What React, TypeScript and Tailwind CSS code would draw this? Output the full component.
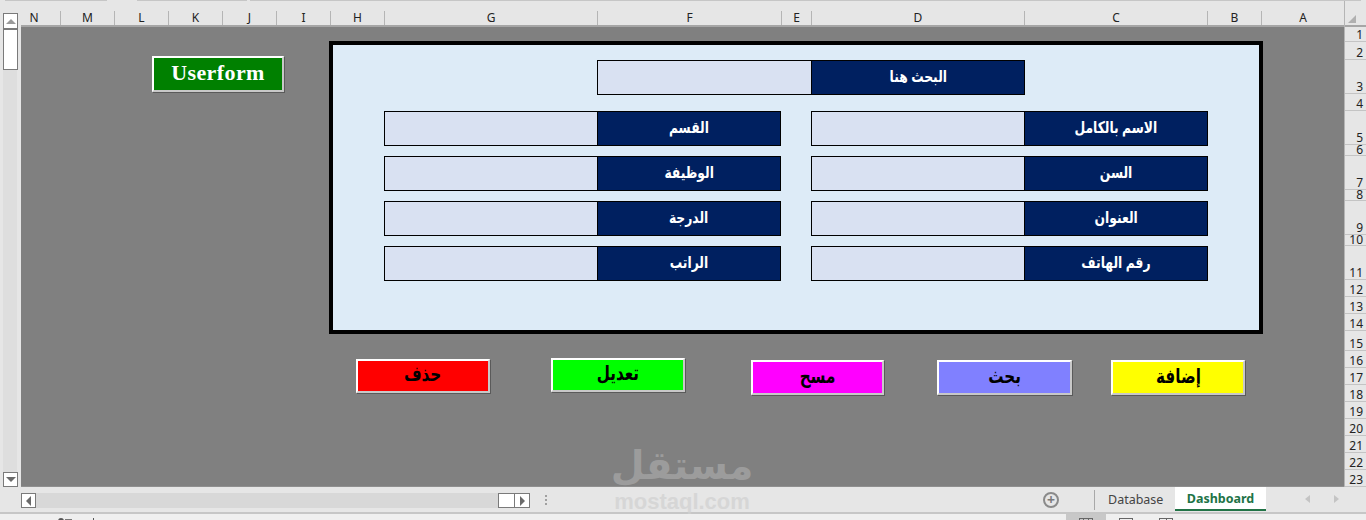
const columns = [
  { label: "N", width: 40 },
  { label: "M", width: 54 },
  { label: "L", width: 54 },
  { label: "K", width: 54 },
  { label: "J", width: 54 },
  { label: "I", width: 54 },
  { label: "H", width: 54 },
  { label: "G", width: 213 },
  { label: "F", width: 184 },
  { label: "E", width: 30 },
  { label: "D", width: 213 },
  { label: "C", width: 183 },
  { label: "B", width: 54 },
  { label: "A", width: 82 },
];

const rows = [
  { label: "1", height: 15 },
  { label: "2", height: 18 },
  { label: "3", height: 34 },
  { label: "4", height: 17 },
  { label: "5", height: 34 },
  { label: "6", height: 11 },
  { label: "7", height: 34 },
  { label: "8", height: 11 },
  { label: "9", height: 34 },
  { label: "10", height: 11 },
  { label: "11", height: 34 },
  { label: "12", height: 17 },
  { label: "13", height: 17 },
  { label: "14", height: 17 },
  { label: "15", height: 20 },
  { label: "16", height: 17 },
  { label: "17", height: 17 },
  { label: "18", height: 17 },
  { label: "19", height: 17 },
  { label: "20", height: 17 },
  { label: "21", height: 17 },
  { label: "22", height: 17 },
  { label: "23", height: 17 },
];

const leftFields = ["القسم", "الوظيفة", "الدرجة", "الراتب"];
const rightFields = ["الاسم بالكامل", "السن", "العنوان", "رقم الهاتف"];

function FieldLabel({ label }: { label: string }) {
  return (
    <div
      dir="rtl"
      className="flex flex-1 items-center justify-center border-l border-black bg-[#002060] pb-[2px] text-[16px] font-bold text-white"
    >
      <span className="inline-block scale-x-[0.77]">{label}</span>
    </div>
  );
}

function Field({ label }: { label: string }) {
  return (
    <div className="flex h-[35px] w-[397px] border border-black">
      <div className="w-[212px] bg-[#d9e1f2]" />
      <FieldLabel label={label} />
    </div>
  );
}

function ActionButton({ label, className }: { label: string; className: string }) {
  return (
    <div
      dir="rtl"
      className={`flex items-center justify-center border-2 border-b-[#c8c8c8] border-l-white border-r-[#c8c8c8] border-t-white pb-1 text-[20px] font-bold text-black shadow-[1px_1px_0_#5a5a5a] ${className}`}
    >
      <span className="inline-block scale-x-[0.76]">{label}</span>
    </div>
  );
}

export default function App() {
  return (
    <div className="relative flex h-[520px] w-[1366px] flex-col overflow-hidden bg-[#e6e6e6] font-['Noto_Sans','DejaVu_Sans',sans-serif] text-[#222]">
      {/* Ribbon edge */}
      <div className="flex h-px flex-none">
        <div className="ml-[5px] w-[102px] bg-[#c6c6c6]" />
        <div className="ml-[30px] w-[110px] bg-[#c6c6c6]" />
        <div className="ml-[3px] w-[1111px] bg-[#c6c6c6]" />
      </div>

      <div className="flex h-[486px] flex-none">
        {/* Vertical scrollbar */}
        <div className="flex w-[21px] flex-col pl-[3px] pt-[12px]">
          <div className="flex h-[16px] w-[15px] items-center justify-center border border-[#7a7a7a] bg-white">
            <div className="h-0 w-0 border-x-[5px] border-b-[5px] border-x-transparent border-b-[#9a9a9a]" />
          </div>
          <div className="h-[41px] w-[15px] border border-[#7a7a7a] bg-white" />
          <div className="w-[14px] flex-1 bg-[#dedede]" />
          <div className="flex h-[15px] w-[15px] items-center justify-center border border-[#7a7a7a] bg-white">
            <div className="h-0 w-0 border-x-[5px] border-t-[5px] border-x-transparent border-t-[#6a6a6a]" />
          </div>
        </div>

        <div className="flex w-[1323px] flex-col">
          {/* Column headers */}
          <div className="flex h-[26px] border-b-2 border-[#a6a6a6] pt-[10px]">
            {columns.map((col) => (
              <div
                key={col.label}
                style={{ width: col.width }}
                className="flex items-center justify-center border-r border-[#b5b5b5] text-[12px] leading-none first:pr-[13px] last:border-r-0"
              >
                {col.label}
              </div>
            ))}
          </div>

          {/* Sheet */}
          <div className="flex flex-1 flex-col border-b border-[#8f8f8f] bg-[#808080]">
            <div className="flex items-start pl-[131px]">
              <div className="mt-[29px] flex h-[36px] w-[132px] items-center justify-center border-2 border-b-[#c8c8c8] border-l-white border-r-[#c8c8c8] border-t-white bg-[#008000] pb-1 font-['Liberation_Serif',serif] text-[22px] font-bold tracking-[0.4px] text-white shadow-[1px_1px_0_#5a5a5a]">
                Userform
              </div>
              <div className="ml-[45px] mt-[14px] flex h-[293px] w-[934px] flex-col border-4 border-black bg-[#ddebf7] pt-[15px] font-['Liberation_Sans','DejaVu_Sans',sans-serif]">
                <div className="ml-[264px]">
                  <div className="flex h-[35px] w-[428px] border border-black">
                    <div className="w-[213px] bg-[#d9e1f2]" />
                    <FieldLabel label="البحث هنا" />
                  </div>
                </div>
                <div className="ml-[51px] mt-[16px] flex gap-[30px]">
                  <div className="flex flex-col gap-[10px]">
                    {leftFields.map((label) => (
                      <Field key={label} label={label} />
                    ))}
                  </div>
                  <div className="flex flex-col gap-[10px]">
                    {rightFields.map((label) => (
                      <Field key={label} label={label} />
                    ))}
                  </div>
                </div>
              </div>
            </div>

            <div className="flex items-start pl-[335px] font-['Liberation_Serif','DejaVu_Sans',serif]">
              <ActionButton label="حذف" className="mt-[25px] h-[34px] w-[134px] bg-[#ff0000]" />
              <ActionButton label="تعديل" className="ml-[61px] mt-[24px] h-[34px] w-[134px] bg-[#00ff00]" />
              <ActionButton label="مسح" className="ml-[66px] mt-[26px] h-[35px] w-[133px] bg-[#ff00ff]" />
              <ActionButton label="بحث" className="ml-[53px] mt-[26px] h-[35px] w-[135px] bg-[#8080ff]" />
              <ActionButton label="إضافة" className="ml-[39px] mt-[26px] h-[35px] w-[134px] bg-[#ffff00]" />
            </div>
          </div>
        </div>

        {/* Row headers */}
        <div className="flex w-[22px] flex-col border-l border-[#b5b5b5]">
          <div className="relative h-[26px] shrink-0 border-b-2 border-[#a6a6a6]">
            <div className="absolute bottom-[2px] left-[3px] h-0 w-0 border-b-[8px] border-l-[8px] border-b-[#b0b0b0] border-l-transparent" />
          </div>
          {rows.map((row) => (
            <div
              key={row.label}
              style={{ height: row.height }}
              className="flex shrink-0 items-end justify-end border-b border-[#c4c4c4] pr-[3px] text-[12px] leading-[10px]"
            >
              <span className={row.height > 11 ? "pb-px" : "pb-0"}>{row.label}</span>
            </div>
          ))}
        </div>
      </div>

      {/* Sheet tabs and horizontal scrollbar */}
      <div className="flex h-[27px] flex-none items-start border-b-2 border-[#c6c6c6]">
        <div className="ml-[21px] mt-[6px] flex h-[15px] w-[509px]">
          <div className="flex w-[15px] items-center justify-center border border-[#7a7a7a] bg-white">
            <div className="h-0 w-0 border-y-[5px] border-r-[5px] border-y-transparent border-r-[#6a6a6a]" />
          </div>
          <div className="flex-1 bg-[#d8d8d8]" />
          <div className="w-[17px] border border-[#7a7a7a] bg-white" />
          <div className="flex w-[15px] items-center justify-center border border-l-0 border-[#7a7a7a] bg-white">
            <div className="h-0 w-0 border-y-[5px] border-l-[5px] border-y-transparent border-l-[#6a6a6a]" />
          </div>
        </div>
        <div className="ml-[15px] mt-[8px] flex flex-col gap-[2px]">
          <div className="h-[2px] w-[2px] bg-[#a0a0a0]" />
          <div className="h-[2px] w-[2px] bg-[#a0a0a0]" />
          <div className="h-[2px] w-[2px] bg-[#a0a0a0]" />
        </div>
        <div className="ml-[496px] mt-[5px] flex h-[16px] w-[16px] items-center justify-center rounded-full border-2 border-[#8a8a8a] text-[14px] font-bold leading-none text-[#7a7a7a]">
          +
        </div>
        <div className="ml-[35px] mt-[3px] h-[20px] w-px bg-[#a8a8a8]" />
        <div className="ml-[13px] mt-[3px] w-[55px] whitespace-nowrap text-[12.5px] leading-[20px] text-[#444]">
          Database
        </div>
        <div className="ml-[12px] flex h-[24px] w-[91px] items-center justify-center border-b-2 border-[#217346] bg-white pt-[3px] text-[12.5px] font-bold text-[#217346]">
          Dashboard
        </div>
        <div className="ml-[39px] mt-[8px] h-0 w-0 border-y-[4px] border-r-[5px] border-y-transparent border-r-[#c4c4c4]" />
        <div className="ml-[24px] mt-[8px] h-0 w-0 border-y-[4px] border-l-[5px] border-y-transparent border-l-[#c4c4c4]" />
      </div>

      {/* Status bar, cut off by the window */}
      <div className="flex h-[6px] flex-none items-start overflow-hidden bg-[#efefef]">
        <div className="ml-[58px] mt-[4px] h-[3px] w-[6px] rounded-t-sm bg-[#555]" />
        <div className="ml-[1px] mt-[5px] h-[2px] w-[7px] bg-[#777]" />
        <div className="ml-[21px] mt-[4px] h-[3px] w-px bg-[#555]" />
        <div className="ml-[972px] flex h-[6px] w-[40px] justify-center bg-[#c8c8c8] pt-[4px]">
          <div className="flex h-[5px] w-[14px] flex-none justify-evenly border border-[#666]">
            <div className="w-px bg-[#666]" />
            <div className="w-px bg-[#666]" />
          </div>
        </div>
        <div className="ml-[13px] mt-[4px] h-[5px] w-[14px] border border-[#666]" />
        <div className="ml-[26px] mt-[4px] flex h-[5px] w-[14px] justify-center border border-[#666]">
          <div className="w-px bg-[#666]" />
        </div>
      </div>

      {/* Mostaql watermark */}
      <div className="absolute left-[613px] top-[441px] flex w-[138px] flex-col items-center text-[#a9a9a9] opacity-70">
        <div dir="rtl" className="font-['DejaVu_Sans',sans-serif] text-[39px] font-bold leading-[50px]">
          مستقل
        </div>
        <div className="font-['Liberation_Sans',sans-serif] text-[22px] font-bold leading-[22px] text-[#d0d0d0]">
          mostaql.com
        </div>
      </div>
    </div>
  );
}
